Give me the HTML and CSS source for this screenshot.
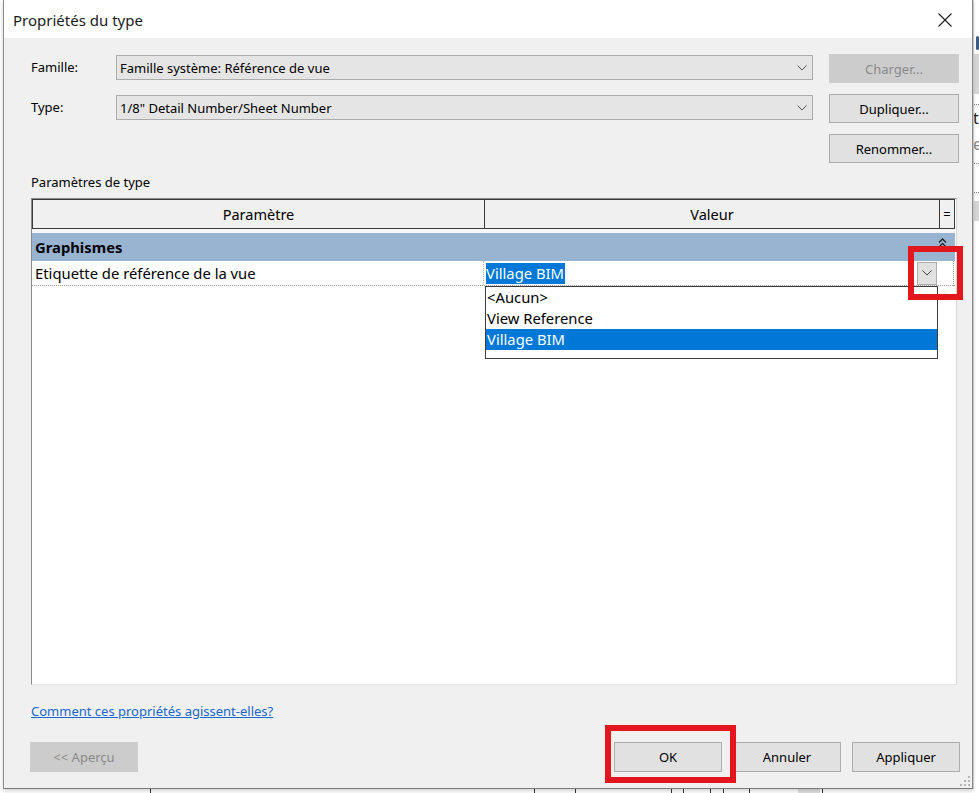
FILE: index.html
```html
<!DOCTYPE html>
<html lang="fr">
<head>
<meta charset="utf-8">
<title>Propriétés du type</title>
<link rel="stylesheet" href="styles.css">
</head>
<body>
<div class="desktop">
  <div class="stage">
    <div class="gutter"></div>

    <div class="dialog">
      <div class="titlebar">
        <span class="title">Propriétés du type</span>
        <svg class="close" width="14" height="14" viewBox="0 0 14 14">
          <path d="M0.5 0.5 L13.5 13.5 M13.5 0.5 L0.5 13.5" stroke="#1a1a1a" stroke-width="1.1" fill="none"/>
        </svg>
      </div>

      <div class="body">
        <div class="form-grid">
          <label class="field-label">Famille:</label>
          <div class="select">
            <span>Famille système: Référence de vue</span>
            <svg class="chev" width="10" height="6" viewBox="0 0 10 6"><path d="M0.5 0.5 L5 5 L9.5 0.5" stroke="#555" fill="none"/></svg>
          </div>
          <button class="btn btn-side" disabled>Charger...</button>

          <label class="field-label">Type:</label>
          <div class="select">
            <span>1/8" Detail Number/Sheet Number</span>
            <svg class="chev" width="10" height="6" viewBox="0 0 10 6"><path d="M0.5 0.5 L5 5 L9.5 0.5" stroke="#555" fill="none"/></svg>
          </div>
          <button class="btn btn-side">Dupliquer...</button>

          <span></span>
          <span></span>
          <button class="btn btn-side">Renommer...</button>
        </div>

        <div class="section-label">Paramètres de type</div>

        <div class="grid">
          <div class="grid-head">
            <div class="hcell hcell-param">Paramètre</div>
            <div class="hcell hcell-value">Valeur</div>
            <div class="hcell hcell-eq">=</div>
          </div>
          <div class="head-gap"></div>
          <div class="group-row">
            <span class="group-name">Graphismes</span>
            <svg class="collapse" width="9" height="10" viewBox="0 0 9 10">
              <path d="M1 4.5 L4.5 1 L8 4.5 M1 9 L4.5 5.5 L8 9" stroke="#222" stroke-width="1.3" fill="none"/>
            </svg>
          </div>
          <div class="prop-row">
            <div class="prop-name">Etiquette de référence de la vue</div>
            <div class="prop-value">
              <span class="sel-text">Village BIM</span>
              <span class="drop-btn">
                <svg width="10" height="6" viewBox="0 0 10 6"><path d="M0.5 0.5 L5 5 L9.5 0.5" stroke="#444" fill="none"/></svg>
              </span>
              <span class="drop-tail"></span>

              <ul class="drop-list">
                <li>&lt;Aucun&gt;</li>
                <li>View Reference</li>
                <li class="active">Village BIM</li>
              </ul>
            </div>
          </div>
        </div>

        <a class="help-link" href="#">Comment ces propriétés agissent-elles?</a>

        <div class="footer">
          <button class="btn btn-foot" disabled>&lt;&lt; Aperçu</button>
          <div class="footer-right">
            <button class="btn btn-foot">OK</button>
            <button class="btn btn-foot">Annuler</button>
            <button class="btn btn-foot">Appliquer</button>
          </div>
        </div>
      </div>

      <!-- red call-out frames -->
      <div class="callout callout-drop"></div>
      <div class="callout callout-ok"></div>

      <svg class="grip" width="10" height="10" viewBox="0 0 10 10">
        <g fill="#b5b5b5">
          <rect x="8" y="0" width="2" height="2"/>
          <rect x="4" y="4" width="2" height="2"/><rect x="8" y="4" width="2" height="2"/>
          <rect x="0" y="8" width="2" height="2"/><rect x="4" y="8" width="2" height="2"/><rect x="8" y="8" width="2" height="2"/>
        </g>
      </svg>
    </div>

    <div class="behind-right">
      <div class="br-blue"></div>
      <div class="br-gray"></div>
      <div class="br-dots"></div>
      <div class="br-char">t</div>
      <div class="br-char br-char-light">e</div>
      <div class="br-dots"></div>
      <div class="br-dots br-dots-2"></div>
      <div class="br-gray br-gray-2"></div>
    </div>
  </div>

  <div class="behind-bottom">
    <span class="tick" style="margin-left:150px"></span>
    <span class="tick" style="margin-left:383px"></span>
    <span class="tick" style="margin-left:40px"></span>
    <span class="tick" style="margin-left:95px"></span>
    <span class="tick" style="margin-left:11px"></span>
    <span class="tick" style="margin-left:26px"></span>
    <span class="tick" style="margin-left:12px"></span>
    <span class="tick" style="margin-left:25px"></span>
    <span class="shade"></span>
    <span class="tick" style="margin-left:2px"></span>
  </div>
</div>
</body>
</html>
```

FILE: styles.css
```css
* { box-sizing: border-box; }

html, body {
  margin: 0;
  padding: 0;
  background: #ffffff;
}

body {
  font-family: "Noto Sans", "Open Sans", sans-serif;
  color: #000;
}

.desktop {
  width: 979px;
  height: 793px;
  overflow: hidden;
  display: flex;
  flex-direction: column;
  background: #ffffff;
}

.stage {
  display: flex;
  height: 789px;
}

.gutter {
  width: 3px;
  flex: none;
}

/* ---------- dialog window ---------- */
.dialog {
  position: relative;
  width: 970px;
  height: 789px;
  flex: none;
  display: flex;
  flex-direction: column;
  background: #f0f0f0;
  border-left: 1px solid #8c8c8c;
  border-right: 1px solid #8c8c8c;
  border-bottom: 1px solid #7a7a7a;
  box-shadow: 0 2px 4px rgba(0, 0, 0, 0.18);
}

.titlebar {
  height: 38px;
  flex: none;
  background: #ffffff;
  display: flex;
  align-items: center;
  justify-content: space-between;
  padding: 0 20px 0 9px;
}

.title {
  font-size: 15px;
  color: #1a1a1a;
  padding-top: 1px;
}

.close {
  display: block;
  margin-top: 2px;
}

.body {
  flex: 1;
  display: flex;
  flex-direction: column;
  padding: 16px 12px 0 27px;
}

/* ---------- family / type form ---------- */
.form-grid {
  display: grid;
  grid-template-columns: 85px 713px 130px;
  grid-auto-rows: 29px;
  row-gap: 11px;
  align-items: start;
}

.field-label {
  font-size: 13px;
  line-height: 25px;
  height: 25px;
  margin-top: 1px;
}

.select {
  width: 697px;
  height: 25px;
  margin-top: 1px;
  background: #e5e5e5;
  border: 1px solid #acacac;
  display: flex;
  align-items: center;
  justify-content: space-between;
  padding: 0 5px 0 3px;
  font-size: 13px;
}

.chev { display: block; }

.btn {
  font-family: "Noto Sans", "Open Sans", sans-serif;
  font-size: 13px;
  color: #000;
  background: #e1e1e1;
  border: 1px solid #adadad;
  padding: 0;
  margin: 0;
}

.btn:disabled {
  background: #cccccc;
  border-color: #cccccc;
  color: #8a8a8a;
}

.btn-side {
  width: 130px;
  height: 29px;
}

.section-label {
  font-size: 13px;
  line-height: 16px;
  margin-top: 11px;
}

/* ---------- property grid ---------- */
.grid {
  margin-top: 8px;
  width: 926px;
  height: 487px;
  background: #ffffff;
  border: 1px solid #8a8a8a;
  border-right-color: #d8d8d8;
  border-bottom-color: #e3e3e3;
  display: flex;
  flex-direction: column;
  font-size: 14.8px;
}

.grid-head {
  display: flex;
  height: 30px;
  flex: none;
  width: 923px;
}

.hcell {
  background: #f0f0f0;
  border: 1px solid #3a3a3a;
  display: flex;
  align-items: center;
  justify-content: center;
  height: 30px;
  font-size: 14.5px;
}

.hcell-param { width: 453px; }
.hcell-value { width: 456px; margin-left: -1px; }
.hcell-eq { width: 16px; margin-left: -1px; font-size: 13px; }

.head-gap {
  height: 4px;
  flex: none;
  background: #f7f7f7;
  width: 923px;
}

.group-row {
  height: 28px;
  flex: none;
  width: 923px;
  background: #99b4d1;
  display: flex;
  align-items: center;
  justify-content: space-between;
  padding: 0 8px 0 3px;
}

.group-name {
  font-weight: bold;
}

.collapse {
  display: block;
  margin-top: -9px;
}

.prop-row {
  height: 25px;
  flex: none;
  display: flex;
  width: 923px;
  border-bottom: 1px dotted #9a9a9a;
}

.prop-name {
  width: 452px;
  padding-left: 3px;
  line-height: 24px;
  border-right: 1px dotted #bdbdbd;
}

.prop-value {
  position: relative;
  flex: 1;
  display: flex;
  align-items: center;
  padding-left: 2px;
}

.sel-text {
  background: #0078d7;
  color: #fff;
  line-height: 21px;
  padding: 0 1px 0 0;
}

.drop-btn {
  margin-left: auto;
  width: 20px;
  height: 23px;
  background: #e1e1e1;
  border: 1px solid #adadad;
  display: flex;
  align-items: center;
  justify-content: center;
}

.drop-btn svg { display: block; }

.drop-tail {
  width: 17px;
  height: 25px;
  border-right: 1px dotted #9a9a9a;
  margin-right: 1px;
}

/* open combo list, drawn over the rows beneath */
.drop-list {
  position: absolute;
  left: 1px;
  top: 25px;
  width: 453px;
  height: 73px;
  margin: 0;
  padding: 0 0 8px;
  list-style: none;
  background: #fff;
  border: 1px solid #3c3c3c;
}

.drop-list li {
  height: 21px;
  line-height: 21px;
  padding-left: 1px;
}

.drop-list li.active {
  background: #0078d7;
  color: #fff;
}

/* ---------- footer ---------- */
.help-link {
  margin-top: 18px;
  font-size: 13px;
  line-height: 16px;
  color: #1a66cc;
  text-decoration: underline;
  align-self: flex-start;
}

.footer {
  margin-top: 23px;
  display: flex;
  justify-content: space-between;
  margin-left: -1px;
}

.footer-right {
  display: flex;
  gap: 11px;
}

.btn-foot {
  width: 108px;
  height: 30px;
}

/* ---------- annotations and window chrome ---------- */
.callout {
  position: absolute;
  border: 6px solid #e3161e;
}

.callout-drop {
  left: 904px;
  top: 246px;
  width: 55px;
  height: 54px;
}

.callout-ok {
  left: 601px;
  top: 725px;
  width: 131px;
  height: 58px;
}

.grip {
  position: absolute;
  right: 2px;
  bottom: 2px;
}

/* ---------- application behind the dialog ---------- */
.behind-right {
  width: 6px;
  flex: none;
  display: flex;
  flex-direction: column;
  border-left: 1px solid #d4d4d4;
  padding-top: 36px;
  overflow: hidden;
}

.br-blue {
  height: 14px;
  width: 3px;
  margin-left: 2px;
  background: #3b5a86;
  border-radius: 2px;
}

.br-gray {
  height: 40px;
  background: #d6d6d6;
  margin-top: 4px;
}

.br-dots {
  height: 1px;
  margin-top: 10px;
  border-top: 1px dotted #888;
}

.br-char {
  font-size: 16px;
  line-height: 18px;
  margin-top: 4px;
  margin-left: -1px;
  color: #222;
}

.br-char-light {
  color: #888;
  margin-top: 8px;
}

.br-dots-2 { margin-top: 28px; }

.br-gray-2 {
  height: 20px;
  margin-top: 8px;
}

.behind-bottom {
  height: 4px;
  display: flex;
}

.tick {
  width: 1px;
  height: 4px;
  background: #333;
  flex: none;
}

.shade {
  width: 22px;
  margin-left: 48px;
  height: 4px;
  background: #e0e0e0;
}
```
